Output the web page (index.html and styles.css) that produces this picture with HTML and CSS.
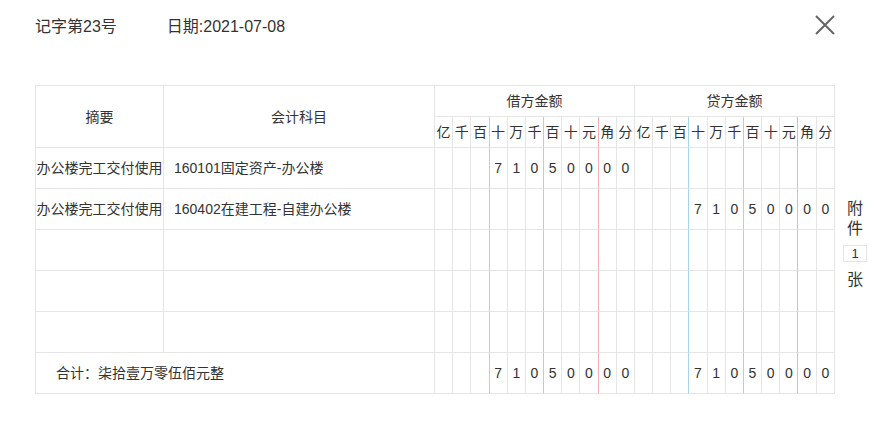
FILE: index.html
```html
<!DOCTYPE html>
<html lang="zh-CN">
<head>
<meta charset="utf-8">
<title>记账凭证</title>
<link rel="stylesheet" href="styles.css">
</head>
<body>
<div class="page">
  <div class="topbar">
    <span class="voucher-no">记字第23号</span>
    <span class="voucher-date">日期:2021-07-08</span>
    <button class="close" type="button" aria-label="关闭">
      <svg width="20" height="20" viewBox="0 0 20 20"><path d="M1 1 L19 19 M19 1 L1 19" stroke="#666" stroke-width="2" fill="none"/></svg>
    </button>
  </div>
  <div class="voucher">
    <table class="grid">
      <colgroup>
        <col class="col-zy"><col class="col-km">
        <col><col><col><col><col><col><col><col><col><col><col>
        <col><col><col><col><col><col><col><col><col><col><col>
      </colgroup>
      <thead>
        <tr class="hrow">
          <th rowspan="2">摘要</th>
          <th rowspan="2">会计科目</th>
          <th colspan="11">借方金额</th>
          <th colspan="11">贷方金额</th>
        </tr>
        <tr class="hrow units">
          <th>亿</th><th>千</th><th class="b">百</th><th>十</th><th>万</th><th class="b">千</th><th>百</th><th>十</th><th class="r">元</th><th>角</th><th>分</th>
          <th>亿</th><th>千</th><th class="b">百</th><th>十</th><th>万</th><th class="b">千</th><th>百</th><th>十</th><th class="r">元</th><th>角</th><th>分</th>
        </tr>
      </thead>
      <tbody>
        <tr class="drow">
          <td class="zy">办公楼完工交付使用</td>
          <td class="km">160101固定资产-办公楼</td>
          <td></td><td></td><td class="b"></td><td>7</td><td>1</td><td class="b">0</td><td>5</td><td>0</td><td class="r">0</td><td>0</td><td>0</td>
          <td></td><td></td><td class="b"></td><td></td><td></td><td class="b"></td><td></td><td></td><td class="r"></td><td></td><td></td>
        </tr>
        <tr class="drow">
          <td class="zy">办公楼完工交付使用</td>
          <td class="km">160402在建工程-自建办公楼</td>
          <td></td><td></td><td class="b"></td><td></td><td></td><td class="b"></td><td></td><td></td><td class="r"></td><td></td><td></td>
          <td></td><td></td><td class="b"></td><td>7</td><td>1</td><td class="b">0</td><td>5</td><td>0</td><td class="r">0</td><td>0</td><td>0</td>
        </tr>
        <tr class="drow">
          <td class="zy"></td>
          <td class="km"></td>
          <td></td><td></td><td class="b"></td><td></td><td></td><td class="b"></td><td></td><td></td><td class="r"></td><td></td><td></td>
          <td></td><td></td><td class="b"></td><td></td><td></td><td class="b"></td><td></td><td></td><td class="r"></td><td></td><td></td>
        </tr>
        <tr class="drow">
          <td class="zy"></td>
          <td class="km"></td>
          <td></td><td></td><td class="b"></td><td></td><td></td><td class="b"></td><td></td><td></td><td class="r"></td><td></td><td></td>
          <td></td><td></td><td class="b"></td><td></td><td></td><td class="b"></td><td></td><td></td><td class="r"></td><td></td><td></td>
        </tr>
        <tr class="drow">
          <td class="zy"></td>
          <td class="km"></td>
          <td></td><td></td><td class="b"></td><td></td><td></td><td class="b"></td><td></td><td></td><td class="r"></td><td></td><td></td>
          <td></td><td></td><td class="b"></td><td></td><td></td><td class="b"></td><td></td><td></td><td class="r"></td><td></td><td></td>
        </tr>
        <tr class="drow">
          <td class="total" colspan="2">合计：柒拾壹万零伍佰元整</td>
          <td></td><td></td><td class="b"></td><td>7</td><td>1</td><td class="b">0</td><td>5</td><td>0</td><td class="r">0</td><td>0</td><td>0</td>
          <td></td><td></td><td class="b"></td><td>7</td><td>1</td><td class="b">0</td><td>5</td><td>0</td><td class="r">0</td><td>0</td><td>0</td>
        </tr>
      </tbody>
    </table>
    <div class="attach">
      <span class="attach-ch">附</span>
      <span class="attach-ch">件</span>
      <span class="attach-count">1</span>
      <span class="attach-ch">张</span>
    </div>
  </div>
</div>
</body>
</html>
```

FILE: styles.css
```css
* { box-sizing: border-box; }

html, body {
  margin: 0;
  padding: 0;
  background: #ffffff;
}

body {
  font-family: "Liberation Sans", "Noto Sans CJK SC", sans-serif;
  color: #333333;
}

.page {
  width: 882px;
  padding: 0 47px 0 35px;
}

.topbar {
  display: flex;
  align-items: center;
  height: 53px;
  font-size: 16px;
  line-height: 20px;
  color: #333333;
}

.voucher-date {
  margin-left: 50px;
}

.close {
  margin-left: auto;
  align-self: flex-start;
  margin-top: 15px;
  padding: 0;
  border: 0;
  background: transparent;
  width: 20px;
  height: 20px;
  display: block;
}

.close svg { display: block; }

.voucher {
  display: flex;
  margin-top: 32px;
  width: 847px;
}

.grid {
  table-layout: fixed;
  width: 800px;
  flex: 0 0 800px;
  border-collapse: separate;
  border-spacing: 0;
  border-top: 1px solid #e5e5e5;
  border-left: 1px solid #e5e5e5;
  font-size: 14px;
  line-height: 20px;
  color: #333333;
}

.col-zy { width: 128px; }
.col-km { width: 271px; }

.grid th,
.grid td {
  padding: 0;
  border-right: 1px solid #e5e5e5;
  border-bottom: 1px solid #e5e5e5;
  text-align: center;
  vertical-align: middle;
  font-weight: normal;
  white-space: nowrap;
  overflow: hidden;
}

.hrow { height: 31px; }
.drow { height: 41px; }

.grid .b { border-right-color: #a8d3ef; }
.grid .r { border-right-color: #f1b0b2; }

.grid td.zy { text-align: center; }

.grid td.km {
  text-align: left;
  padding-left: 10px;
}

.grid td.total {
  text-align: left;
  padding-left: 20px;
}

.attach {
  width: 40px;
  margin-top: 114px;
  display: flex;
  flex-direction: column;
  align-items: center;
  font-size: 16px;
  line-height: 20px;
  color: #333333;
  align-self: flex-start;
}

.attach-count {
  margin: 6px 0 8px;
  width: 24px;
  height: 17px;
  border: 1px solid #e5e5e5;
  font-size: 13px;
  line-height: 15px;
  text-align: center;
}
```
